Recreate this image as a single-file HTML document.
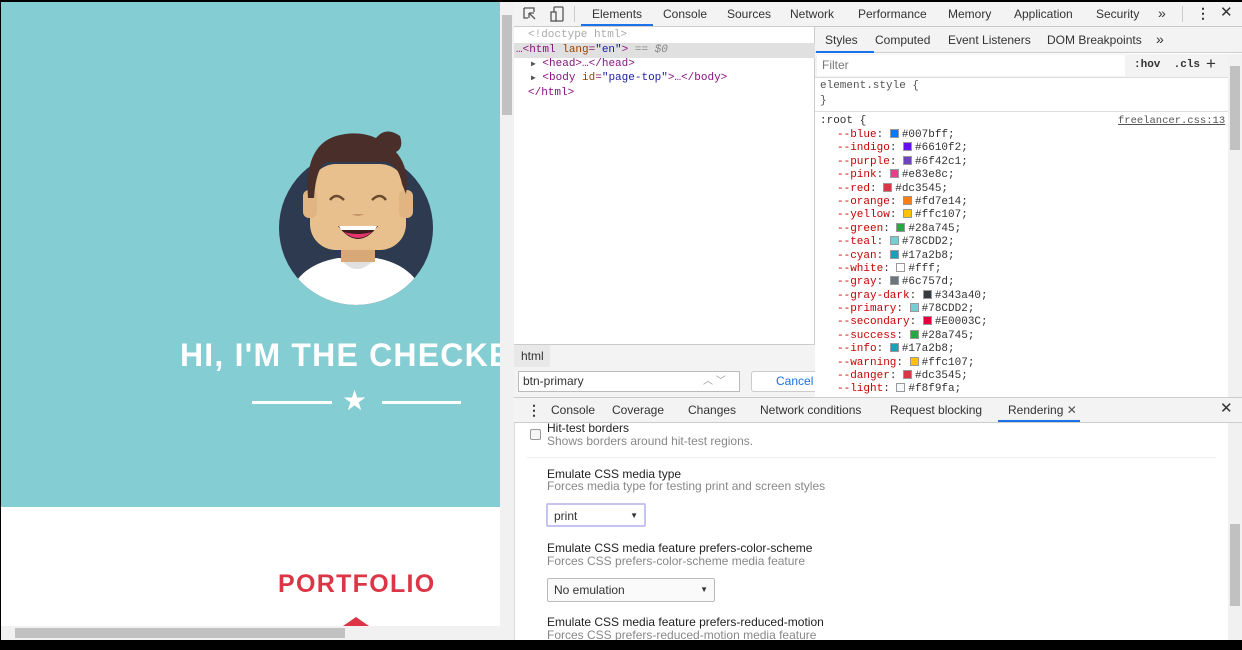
<!DOCTYPE html>
<html><head><style>
*{box-sizing:border-box;margin:0;padding:0}
body{width:1242px;height:650px;background:#000;position:relative;overflow:hidden;font-family:"Liberation Sans",sans-serif;font-size:12px;color:#333}
.a{position:absolute}
.mono{font-family:"Liberation Mono",monospace;font-size:11px}
.tab{position:absolute;top:0;height:24px;line-height:24px;font-size:12px;color:#333}
.sw{display:inline-block;width:9px;height:9px;border:1px solid #999;vertical-align:-1px;margin-right:3px}
.var{color:#c80000}
.css div{height:13.4px;line-height:13.4px;white-space:nowrap}
.t{font-size:12px;color:#222}
.s{font-size:12px;color:#888}
.sel{position:absolute;height:24px;border:1px solid #bbb;border-radius:2px;background:#fff;font-size:12px;line-height:22px;padding-left:6px}
</style></head><body>
<!-- page -->
<div class="a" style="left:1px;top:2px;width:499px;height:505px;background:#84cdd2"></div>
<div class="a" style="left:1px;top:507px;width:499px;height:119px;background:#fff"></div>
<svg class="a" style="left:278px;top:128px" width="158" height="180" viewBox="0 0 158 180">
<defs><clipPath id="c"><circle cx="78" cy="100" r="77"/></clipPath></defs>
<circle cx="78" cy="100" r="77" fill="#2e3a4f"/>
<g clip-path="url(#c)">
<path d="M8 180 Q14 138 60 130 L98 130 Q142 138 150 180Z" fill="#fff"/>
<path d="M62 130 Q78 152 98 130Z" fill="#e0e0e0"/>
</g>
<rect x="63" y="104" width="34" height="30" fill="#d9a877"/>
<rect x="32" y="36" width="96" height="86" rx="26" fill="#e8c08d"/>
<rect x="25" y="62" width="14" height="28" rx="6" fill="#e0b582"/>
<rect x="121" y="62" width="14" height="28" rx="6" fill="#e0b582"/>
<path d="M30 70 Q26 18 58 8 Q80 2 98 10 Q108 -2 122 8 Q126 20 118 24 Q132 40 128 66 L124 56 Q120 36 108 34 L48 34 Q38 40 36 70Z" fill="#4a2e2a"/>
<path d="M52 72 Q58 64 66 72 M94 72 Q102 64 108 72" stroke="#6b4a2e" stroke-width="2.5" fill="none"/>
<path d="M60 98 Q80 124 100 98Z" fill="#3a1e1e"/>
<path d="M66 104 Q80 116 94 104 Q80 108 66 104Z" fill="#e8336f"/>
<path d="M61 98 L99 98 L97 102 L63 102Z" fill="#fff"/>
<path d="M74 86 Q80 90 86 86Z" fill="#c9986a"/>
</svg>
<div class="a" style="left:180px;top:337px;width:320px;overflow:hidden;white-space:nowrap;color:#fff;font-weight:bold;font-size:32px;letter-spacing:1.2px">HI, I'M THE CHECKER</div>
<div class="a" style="left:252px;top:401px;width:80px;height:3px;background:#fff"></div>
<div class="a" style="left:382px;top:401px;width:79px;height:3px;background:#fff"></div>
<div class="a" style="left:342px;top:387px;color:#fff;font-size:28px;line-height:28px">★</div>
<div class="a" style="left:278px;top:570px;color:#dc3545;font-weight:bold;font-size:25px;letter-spacing:1.3px">PORTFOLIO</div>
<div class="a" style="left:343px;top:617px;width:0;height:0;border-left:13px solid transparent;border-right:13px solid transparent;border-bottom:9px solid #dc3545"></div>
<!-- scrollbars -->
<div class="a" style="left:500px;top:2px;width:14px;height:638px;background:#f1f1f1"></div>
<div class="a" style="left:502px;top:15px;width:10px;height:100px;background:#c1c1c1"></div>
<div class="a" style="left:1px;top:626px;width:499px;height:14px;background:#f1f1f1"></div>
<div class="a" style="left:15px;top:628px;width:330px;height:10px;background:#c1c1c1"></div>
<!-- devtools top bar -->
<div class="a" style="left:514px;top:2px;width:728px;height:25px;background:#f3f3f3;border-bottom:1px solid #ccc"></div>
<svg class="a" style="left:522px;top:6px" width="44" height="16"><path d="M2 2h10v4M2 2v10h4M7 7l6 6M7 7h5M7 7v5" stroke="#555" fill="none" stroke-width="1.3"/><rect x="32" y="1" width="9" height="14" rx="1" stroke="#555" fill="none" stroke-width="1.3"/><rect x="29" y="6" width="5" height="9" stroke="#555" fill="#f3f3f3" stroke-width="1.3"/></svg>
<div class="a" style="left:574px;top:6px;width:1px;height:16px;background:#ccc"></div>
<div class="tab" style="left:592px;top:2px">Elements</div>
<div class="a" style="left:581px;top:24px;width:72px;height:2px;background:#1a73e8"></div>
<div class="tab" style="left:663px;top:2px">Console</div>
<div class="tab" style="left:727px;top:2px">Sources</div>
<div class="tab" style="left:790px;top:2px">Network</div>
<div class="tab" style="left:858px;top:2px">Performance</div>
<div class="tab" style="left:948px;top:2px">Memory</div>
<div class="tab" style="left:1014px;top:2px">Application</div>
<div class="tab" style="left:1096px;top:2px">Security</div>
<div class="tab" style="left:1158px;top:1px;font-size:14px">»</div>
<div class="a" style="left:1182px;top:6px;width:1px;height:16px;background:#ccc"></div>
<div class="tab" style="left:1196px;top:1px;font-size:14px;font-weight:bold">⋮</div>
<div class="tab" style="left:1220px;top:1px;font-size:15px">✕</div>
<!-- elements panel -->
<div class="a" style="left:514px;top:27px;width:301px;height:317px;background:#fff;border-right:1px solid #ccc"></div>
<div class="a mono" style="left:528px;top:29px;color:#aaa">&lt;!doctype html&gt;</div>
<div class="a" style="left:514px;top:43px;width:301px;height:15px;background:#e0e0e0"></div>
<div class="a mono" style="left:516px;top:44px;color:#881280">…&lt;html <span style="color:#994500">lang</span>=<span style="color:#1a1aa6">"en"</span>&gt; <span style="color:#888;font-style:italic">== $0</span></div>
<div class="a mono" style="left:531px;top:58px;color:#881280"><span style="color:#555;font-size:8px">▶</span> &lt;head&gt;…&lt;/head&gt;</div>
<div class="a mono" style="left:531px;top:72px;color:#881280"><span style="color:#555;font-size:8px">▶</span> &lt;body <span style="color:#994500">id</span>=<span style="color:#1a1aa6">"page-top"</span>&gt;…&lt;/body&gt;</div>
<div class="a mono" style="left:528px;top:87px;color:#881280">&lt;/html&gt;</div>
<div class="a" style="left:514px;top:344px;width:301px;height:24px;background:#f3f3f3;border-top:1px solid #ccc"></div>
<div class="a" style="left:514px;top:345px;width:36px;height:22px;background:#e8e8e8;line-height:22px;padding-left:7px">html</div>
<div class="a" style="left:514px;top:368px;width:301px;height:29px;background:#f3f3f3"></div>
<div class="a" style="left:518px;top:371px;width:222px;height:21px;background:#fff;border:1px solid #bbb;line-height:19px;padding-left:4px">btn-primary<span style="position:absolute;left:184px;color:#999;font-size:10px">︿ ﹀</span></div>
<div class="a" style="left:751px;top:371px;width:64px;height:21px;background:#fff;border:1px solid #ccc;border-right:none;border-radius:3px 0 0 3px;line-height:19px;padding-left:24px;color:#1a73e8">Cancel</div>
<!-- styles panel -->
<div class="a" style="left:815px;top:27px;width:427px;height:370px;background:#fff"></div>
<div class="a" style="left:815px;top:27px;width:427px;height:26px;background:#f3f3f3;border-bottom:1px solid #ccc"></div>
<div class="tab" style="left:825px;top:28px">Styles</div>
<div class="a" style="left:816px;top:51px;width:58px;height:2px;background:#1a73e8"></div>
<div class="tab" style="left:875px;top:28px">Computed</div>
<div class="tab" style="left:948px;top:28px">Event Listeners</div>
<div class="tab" style="left:1047px;top:28px">DOM Breakpoints</div>
<div class="tab" style="left:1156px;top:27px;font-size:14px">»</div>
<div class="a" style="left:815px;top:54px;width:413px;height:24px;background:#f3f3f3;border-bottom:1px solid #ddd"></div>
<div class="a" style="left:817px;top:55px;width:308px;height:21px;background:#fff;line-height:21px;padding-left:5px;color:#777">Filter</div>
<div class="a mono" style="left:1134px;top:59px;font-weight:bold;color:#333">:hov&nbsp;&nbsp;.cls</div>
<div class="a" style="left:1206px;top:54px;font-size:17px">+</div>
<div class="a mono" style="left:820px;top:80px;color:#555">element.style {</div>
<div class="a mono" style="left:820px;top:95px;color:#555">}</div>
<div class="a" style="left:815px;top:111px;width:413px;height:1px;background:#ddd"></div>
<div class="a mono" style="left:820px;top:115px">:root {</div>
<div class="a mono" style="left:1118px;top:115px;color:#555;text-decoration:underline;font-size:10.5px">freelancer.css:13</div>
<div class="a mono css" style="left:837px;top:129px">
<div><span class="var">--blue</span>: <span class="sw" style="background:#007bff"></span>#007bff;</div>
<div><span class="var">--indigo</span>: <span class="sw" style="background:#6610f2"></span>#6610f2;</div>
<div><span class="var">--purple</span>: <span class="sw" style="background:#6f42c1"></span>#6f42c1;</div>
<div><span class="var">--pink</span>: <span class="sw" style="background:#e83e8c"></span>#e83e8c;</div>
<div><span class="var">--red</span>: <span class="sw" style="background:#dc3545"></span>#dc3545;</div>
<div><span class="var">--orange</span>: <span class="sw" style="background:#fd7e14"></span>#fd7e14;</div>
<div><span class="var">--yellow</span>: <span class="sw" style="background:#ffc107"></span>#ffc107;</div>
<div><span class="var">--green</span>: <span class="sw" style="background:#28a745"></span>#28a745;</div>
<div><span class="var">--teal</span>: <span class="sw" style="background:#78cdd2"></span>#78CDD2;</div>
<div><span class="var">--cyan</span>: <span class="sw" style="background:#17a2b8"></span>#17a2b8;</div>
<div><span class="var">--white</span>: <span class="sw" style="background:#fff"></span>#fff;</div>
<div><span class="var">--gray</span>: <span class="sw" style="background:#6c757d"></span>#6c757d;</div>
<div><span class="var">--gray-dark</span>: <span class="sw" style="background:#343a40"></span>#343a40;</div>
<div><span class="var">--primary</span>: <span class="sw" style="background:#78cdd2"></span>#78CDD2;</div>
<div><span class="var">--secondary</span>: <span class="sw" style="background:#e0003c"></span>#E0003C;</div>
<div><span class="var">--success</span>: <span class="sw" style="background:#28a745"></span>#28a745;</div>
<div><span class="var">--info</span>: <span class="sw" style="background:#17a2b8"></span>#17a2b8;</div>
<div><span class="var">--warning</span>: <span class="sw" style="background:#ffc107"></span>#ffc107;</div>
<div><span class="var">--danger</span>: <span class="sw" style="background:#dc3545"></span>#dc3545;</div>
<div><span class="var">--light</span>: <span class="sw" style="background:#f8f9fa"></span>#f8f9fa;</div>
</div>
<div class="a" style="left:1228px;top:54px;width:14px;height:343px;background:#f1f1f1"></div>
<div class="a" style="left:1230px;top:66px;width:10px;height:84px;background:#c1c1c1"></div>
<!-- drawer -->
<div class="a" style="left:514px;top:397px;width:728px;height:26px;background:#f3f3f3;border-top:1px solid #ccc;border-bottom:1px solid #ccc"></div>
<div class="tab" style="left:527px;top:398px;font-weight:bold;font-size:14px">⋮</div>
<div class="tab" style="left:551px;top:398px">Console</div>
<div class="tab" style="left:612px;top:398px">Coverage</div>
<div class="tab" style="left:688px;top:398px">Changes</div>
<div class="tab" style="left:760px;top:398px">Network conditions</div>
<div class="tab" style="left:890px;top:398px">Request blocking</div>
<div class="tab" style="left:1008px;top:398px">Rendering <span style="color:#555">✕</span></div>
<div class="a" style="left:998px;top:420px;width:82px;height:2px;background:#1a73e8"></div>
<div class="tab" style="left:1220px;top:397px;font-size:15px">✕</div>
<div class="a" style="left:514px;top:423px;width:714px;height:217px;background:#fff"></div>
<div class="a" style="left:530px;top:429px;width:11px;height:11px;border:1px solid #999;border-radius:2px;background:#f5f5f5"></div>
<div class="a t" style="left:547px;top:421px">Hit-test borders</div>
<div class="a s" style="left:547px;top:434px">Shows borders around hit-test regions.</div>
<div class="a" style="left:527px;top:457px;width:689px;height:1px;background:#eee"></div>
<div class="a t" style="left:547px;top:467px">Emulate CSS media type</div>
<div class="a s" style="left:547px;top:479px">Forces media type for testing print and screen styles</div>
<div class="sel" style="left:546px;top:503px;width:100px;border:2px solid #c5c3f0">print<span style="position:absolute;right:6px;font-size:8px">▼</span></div>
<div class="a t" style="left:547px;top:541px">Emulate CSS media feature prefers-color-scheme</div>
<div class="a s" style="left:547px;top:554px">Forces CSS prefers-color-scheme media feature</div>
<div class="sel" style="left:547px;top:578px;width:168px;background:#fafafa">No emulation<span style="position:absolute;right:6px;font-size:8px">▼</span></div>
<div class="a t" style="left:547px;top:615px">Emulate CSS media feature prefers-reduced-motion</div>
<div class="a s" style="left:547px;top:628px;height:12px;overflow:hidden">Forces CSS prefers-reduced-motion media feature</div>
<div class="a" style="left:1228px;top:423px;width:14px;height:217px;background:#f1f1f1"></div>
<div class="a" style="left:1230px;top:524px;width:10px;height:82px;background:#c1c1c1"></div>
<div class="a" style="left:514px;top:423px;width:1px;height:217px;background:#ddd"></div>
</body></html>
